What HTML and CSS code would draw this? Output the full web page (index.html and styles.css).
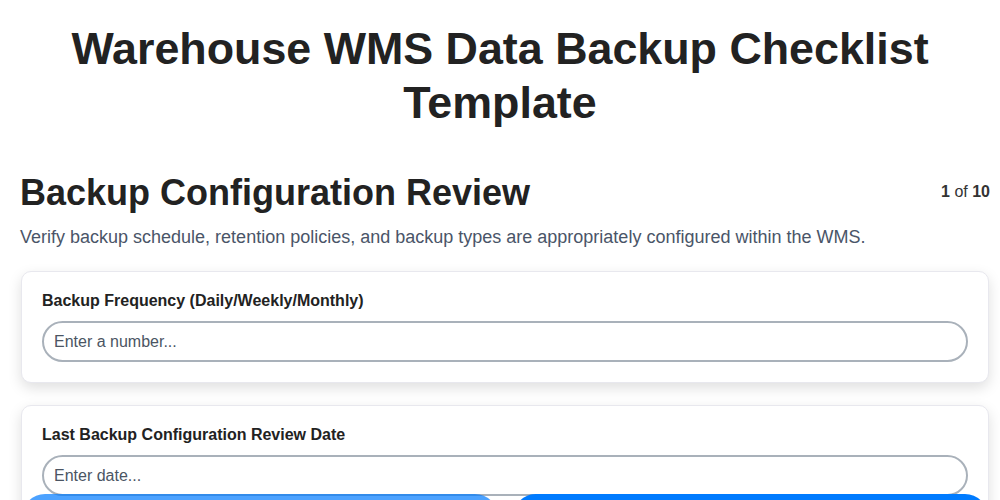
FILE: index.html
```html
<!DOCTYPE html>
<html lang="en">
<head>
<meta charset="utf-8">
<title>Warehouse WMS Data Backup Checklist Template</title>
<link rel="stylesheet" href="styles.css">
</head>
<body>
<div class="page">
  <h1 class="title">Warehouse WMS Data Backup Checklist Template</h1>
  <section class="step">
    <div class="step-head">
      <h2 class="step-title">Backup Configuration Review</h2>
      <div class="step-count"><b>1</b> of <b>10</b></div>
    </div>
    <p class="step-desc">Verify backup schedule, retention policies, and backup types are appropriately configured within the WMS.</p>
    <div class="card">
      <label class="field-label" for="f1">Backup Frequency (Daily/Weekly/Monthly)</label>
      <input class="field-input" id="f1" type="text" placeholder="Enter a number...">
    </div>
    <div class="card">
      <label class="field-label" for="f2">Last Backup Configuration Review Date</label>
      <input class="field-input" id="f2" type="text" placeholder="Enter date...">
    </div>
  </section>
</div>
<nav class="nav">
  <button class="btn btn-prev" type="button">Previous</button>
  <button class="btn btn-next" type="button">Next</button>
</nav>
</body>
</html>
```
FILE: styles.css
```css
html, body {
  margin: 0;
  padding: 0;
  background: #fff;
}
body {
  font-family: "Liberation Sans", Arial, sans-serif;
  color: #222;
}
.title {
  margin: 22px 0 0;
  font-size: 44.8px;
  line-height: 1.2;
  font-weight: 700;
  text-align: center;
  color: #222;
}
.step {
  padding: 0 10px 0 20px;
  margin-top: 41px;
}
.step-head {
  display: flex;
  justify-content: space-between;
  align-items: center;
}
.step-title {
  margin: 0;
  font-size: 36px;
  line-height: 1.2;
  font-weight: 700;
  color: #222;
}
.step-count {
  font-size: 16px;
  color: #333;
}
.step-desc {
  margin: 10px 0 20px;
  font-size: 18px;
  line-height: 1.5;
  color: #4a5568;
}
.card {
  margin: 0 1px 22px;
  padding: 20px;
  background: #fff;
  border: 1px solid #e8e8ee;
  border-radius: 10px;
  box-shadow: 0 5px 14px rgba(0, 0, 0, 0.13);
}
.field-label {
  display: block;
  margin-bottom: 11px;
  font-size: 16px;
  line-height: 1.15;
  font-weight: 700;
  color: #222;
}
.field-input {
  display: block;
  box-sizing: border-box;
  width: 100%;
  height: 41px;
  padding: 0 10px;
  border: 2px solid #a9b1ba;
  border-radius: 22px;
  font-family: "Liberation Sans", Arial, sans-serif;
  font-size: 16px;
  color: #222;
  background: #fff;
  outline: none;
}
.field-input::placeholder {
  color: #4b5563;
}
.nav {
  position: fixed;
  left: 22px;
  right: 12px;
  bottom: -40px;
  display: flex;
  gap: 15px;
}
.btn {
  flex: 1;
  height: 46px;
  border: none;
  border-radius: 24px;
  font-family: "Liberation Sans", Arial, sans-serif;
  font-size: 16px;
  font-weight: 700;
  color: #fff;
  background: #007bff;
}
.btn-prev {
  opacity: 0.7;
}
```
